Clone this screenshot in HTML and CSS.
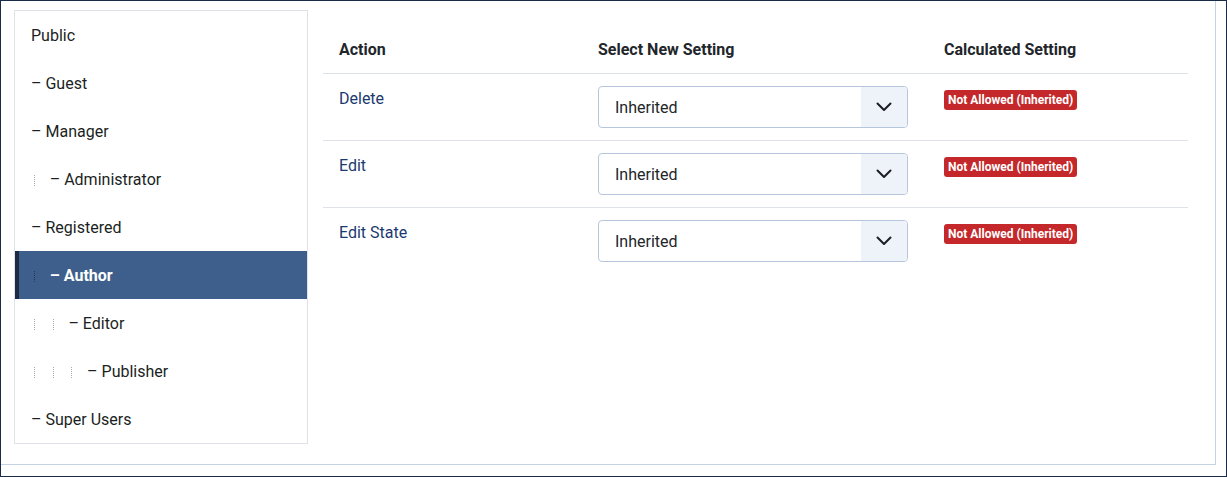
FILE: index.html
```html
<!DOCTYPE html>
<html lang="en">
<head>
<meta charset="utf-8">
<title>Permissions</title>
<link rel="stylesheet" href="styles.css">
</head>
<body>
<div class="frame">
  <div class="panel">
    <ul class="groups">
      <li class="group">Public</li>
      <li class="group">– Guest</li>
      <li class="group">– Manager</li>
      <li class="group"><span class="gi"></span>– Administrator</li>
      <li class="group">– Registered</li>
      <li class="group active"><span class="gi"></span>– Author</li>
      <li class="group"><span class="gi"></span><span class="gi"></span>– Editor</li>
      <li class="group"><span class="gi"></span><span class="gi"></span><span class="gi"></span>– Publisher</li>
      <li class="group">– Super Users</li>
    </ul>
    <div class="main">
      <table class="perms">
        <thead>
          <tr>
            <th class="c-action">Action</th>
            <th class="c-select">Select New Setting</th>
            <th class="c-calc">Calculated Setting</th>
          </tr>
        </thead>
        <tbody>
          <tr>
            <td><a class="action" href="#">Delete</a></td>
            <td>
              <div class="select"><span class="select-value">Inherited</span><span class="select-btn"><svg width="16" height="10" viewBox="0 0 16 10"><path d="M1.5 1.5 L8 8 L14.5 1.5" fill="none" stroke="#1b1f23" stroke-width="2" stroke-linecap="round" stroke-linejoin="round"/></svg></span></div>
            </td>
            <td><span class="badge">Not Allowed (Inherited)</span></td>
          </tr>
          <tr>
            <td><a class="action" href="#">Edit</a></td>
            <td>
              <div class="select"><span class="select-value">Inherited</span><span class="select-btn"><svg width="16" height="10" viewBox="0 0 16 10"><path d="M1.5 1.5 L8 8 L14.5 1.5" fill="none" stroke="#1b1f23" stroke-width="2" stroke-linecap="round" stroke-linejoin="round"/></svg></span></div>
            </td>
            <td><span class="badge">Not Allowed (Inherited)</span></td>
          </tr>
          <tr>
            <td><a class="action" href="#">Edit State</a></td>
            <td>
              <div class="select"><span class="select-value">Inherited</span><span class="select-btn"><svg width="16" height="10" viewBox="0 0 16 10"><path d="M1.5 1.5 L8 8 L14.5 1.5" fill="none" stroke="#1b1f23" stroke-width="2" stroke-linecap="round" stroke-linejoin="round"/></svg></span></div>
            </td>
            <td><span class="badge">Not Allowed (Inherited)</span></td>
          </tr>
        </tbody>
      </table>
    </div>
  </div>
</div>
</body>
</html>
```

FILE: styles.css
```css
* { box-sizing: border-box; }
html, body { margin: 0; padding: 0; height: 100%; }
body {
  font-family: Roboto, "Liberation Sans", sans-serif;
  color: #22262a;
  background: #fff;
}
.frame {
  width: 1227px;
  height: 477px;
  border: 1px solid #1b2a47;
  overflow: hidden;
}
.panel {
  width: 1215px;
  height: 464px;
  border-right: 1px solid #c6d3e6;
  border-bottom: 1px solid #c6d3e6;
  padding: 9px 0 0 13px;
  display: flex;
  align-items: flex-start;
  gap: 15px;
}
.groups {
  list-style: none;
  margin: 0;
  padding: 0;
  width: 294px;
  border: 1px solid #dfe3e7;
}
.group {
  height: 48px;
  line-height: 46px;
  padding: 2px 0 0 16px;
  font-size: 16px;
  color: #1b1f23;
  white-space: nowrap;
}
.group.active {
  background: #3e5f8b;
  box-shadow: inset 4px 0 0 #1d2b42;
  color: #fff;
  font-weight: 700;
}
.gi {
  display: inline-block;
  width: 18.7px;
  height: 11px;
  vertical-align: -1px;
  position: relative;
}
.gi::before {
  content: "";
  position: absolute;
  left: 3px;
  top: 0;
  height: 11px;
  border-left: 1px dotted #a9adb2;
}
.active .gi::before { border-left-color: #2a3446; }
.main {
  padding-top: 15px;
}
.perms {
  border-collapse: collapse;
  width: 865px;
  table-layout: fixed;
}
.perms th, .perms td {
  text-align: left;
  vertical-align: top;
  padding: 12px 16px;
  font-size: 16px;
  line-height: 24px;
}
.perms th {
  font-weight: 700;
  color: #22262a;
  padding: 13px 16px 11px;
  border-bottom: 1px solid #dde3ea;
}
.perms td { border-bottom: 1px solid #dfe3e7; }
.perms tbody tr:last-child td { border-bottom: none; }
.c-action { width: 259px; }
.c-select { width: 346px; }
.c-calc { width: 260px; }
.action {
  display: inline-block;
  padding-top: 1px;
  color: #1b3a70;
  text-decoration: none;
}
.select {
  display: flex;
  width: 310px;
  height: 42px;
  border: 1px solid #b7c6dc;
  border-radius: 4px;
  overflow: hidden;
  background: #fff;
}
.select-value {
  flex: 1;
  padding: 2px 0 0 16px;
  line-height: 38px;
  font-size: 16px;
  color: #22262a;
}
.select-btn {
  width: 46px;
  background: #eef2f9;
  display: flex;
  align-items: center;
  justify-content: center;
}
.badge {
  display: inline-block;
  margin-top: 4px;
  background: #c4282a;
  color: #fff;
  font-weight: 700;
  font-size: 12px;
  line-height: 20px;
  padding: 0 4px;
  border-radius: 3px;
  white-space: nowrap;
}
```
